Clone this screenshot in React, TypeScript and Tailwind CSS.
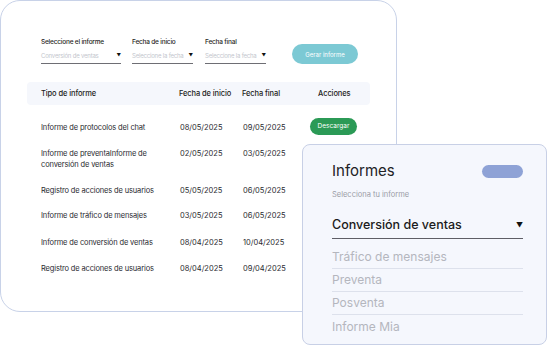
import React from "react";

type Row = { name: string[]; start: string; end: string; action?: boolean; h: string };

const rows: Row[] = [
  { name: ["Informe de protocolos del chat"], start: "08/05/2025", end: "09/05/2025", action: true, h: "h-[26px]" },
  { name: ["Informe de preventaInforme de", "conversión de ventas"], start: "02/05/2025", end: "03/05/2025", h: "h-[37px]" },
  { name: ["Registro de acciones de usuarios"], start: "05/05/2025", end: "06/05/2025", h: "h-[25px]" },
  { name: ["Informe de tráfico de mensajes"], start: "03/05/2025", end: "06/05/2025", h: "h-[27px]" },
  { name: ["Informe de conversión de ventas"], start: "08/04/2025", end: "10/04/2025", h: "h-[26px]" },
  { name: ["Registro de acciones de usuarios"], start: "08/04/2025", end: "09/04/2025", h: "h-[26px]" },
];

const options = ["Tráfico de mensajes", "Preventa", "Posventa", "Informe Mia"];

function Filter({ label, value, width }: { label: string; value: string; width: string }) {
  return (
    <div className={`flex flex-col ${width}`}>
      <span className="text-[6.5px] leading-[10px] font-medium text-[#1f1f24] tracking-[-0.2px] whitespace-nowrap">{label}</span>
      <div className="mt-[4px] flex items-center justify-between border-b border-[#6e6e74] pb-[3px] h-[13px]">
        <span className="text-[6px] text-[#c3c6cd] whitespace-nowrap tracking-[-0.2px]">{value}</span>
        <span className="text-[4.5px] text-[#111] mt-[2px]">▼</span>
      </div>
    </div>
  );
}

export default function App() {
  return (
    <div
      className="relative w-[549px] h-[346px] bg-white overflow-hidden"
      style={{ fontFamily: "Inter, 'Noto Sans', sans-serif" }}
    >
      {/* main card */}
      <div className="w-[397px] h-[312px] border border-[#c8d2e8] rounded-[20px] bg-white">
        <div className="flex items-start pl-[40px] pt-[36px]">
          <Filter label="Seleccione el informe" value="Conversión de ventas" width="w-[80px]" />
          <div className="w-[11px]" />
          <Filter label="Fecha de inicio" value="Seleccione la fecha" width="w-[61px]" />
          <div className="w-[12px]" />
          <Filter label="Fecha final" value="Seleccione la fecha" width="w-[61px]" />
          <button className="ml-[26px] mt-[7px] w-[66px] h-[20px] rounded-full bg-[#7cc9d4] text-white text-[6px]">
            Gerar informe
          </button>
        </div>

        <div className="ml-[26px] mt-[18px] w-[343px]">
          <div className="flex items-center h-[23px] pl-[14px] rounded-[4px] bg-[#f5f7fc] text-[7.5px] font-medium text-[#1d1d22] tracking-[-0.1px]">
            <span className="w-[138px]">Tipo de informe</span>
            <span className="w-[63px]">Fecha de ínicio</span>
            <span className="w-[76px]">Fecha final</span>
            <span>Acciones</span>
          </div>

          <div className="mt-[17px] pl-[14px]">
            {rows.map((r, i) => (
              <div key={i} className={`flex items-start ${r.h} text-[7.5px] leading-[11px] text-[#2a2a30]`}>
                <div className="w-[139px] tracking-[-0.15px]">
                  {r.name.map((l) => (
                    <div key={l}>{l}</div>
                  ))}
                </div>
                <span className="w-[63px]">{r.start}</span>
                <span className="w-[67px]">{r.end}</span>
                {r.action && (
                  <button className="-mt-[4px] w-[47px] h-[17px] rounded-full bg-[#2b9a56] text-white text-[6.5px]">
                    Descargar
                  </button>
                )}
              </div>
            ))}
          </div>
        </div>
      </div>

      {/* informes dropdown panel */}
      <div className="absolute left-[302px] top-[144px] w-[245px] h-[201px] rounded-[8px] border border-[#c8d0e6] bg-[#f5f7fd] pl-[29px] pr-[23px] pt-[16px]">
        <div className="flex items-center justify-between">
          <span className="text-[15px] leading-[20px] text-[#222226]">Informes</span>
          <span className="w-[41px] h-[13px] rounded-full bg-[#8ea2d6]" />
        </div>
        <div className="mt-[8px] text-[7.5px] text-[#9a9ca6]">Selecciona tu informe</div>
        <div className="mt-[16px] flex items-center justify-between border-b border-[#5e5e66] pb-[3px]">
          <span className="text-[12.5px] font-medium text-[#1b1b20]">Conversión de ventas</span>
          <span className="text-[7px] text-[#111] mt-[2px]">▼</span>
        </div>
        <div className="pt-[7px]">
          {options.map((o, i) => (
            <div
              key={o}
              className={`h-[23px] flex items-center text-[12px] text-[#b4b6be] ${i < options.length - 1 ? "border-b border-[#dde1ec]" : ""}`}
            >
              {o}
            </div>
          ))}
        </div>
      </div>
    </div>
  );
}
